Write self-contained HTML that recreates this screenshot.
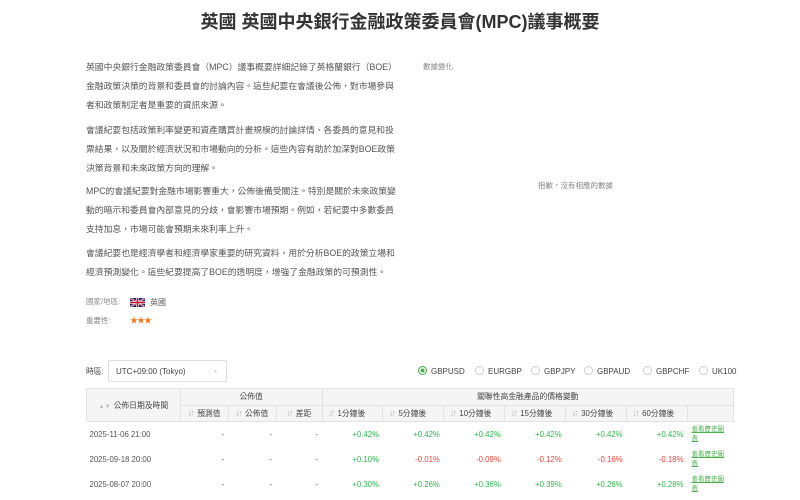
<!DOCTYPE html><html><head><meta charset="utf-8"><style>
*{margin:0;padding:0;box-sizing:border-box}
body{width:800px;height:500px;overflow:hidden;background:#fff;font-family:"Liberation Sans","Noto Sans CJK TC",sans-serif;color:#444;position:relative}
.a{position:absolute;white-space:nowrap}
h1{position:absolute;top:8px;left:0;width:800px;text-align:center;font-size:18px;font-weight:bold;color:#333}
.p{position:absolute;left:86px;font-size:8.8px;line-height:19px;color:#555}
.lab{font-size:7.5px;color:#888}
table{position:absolute;left:86px;top:388px;width:648px;border-collapse:collapse;font-size:7.8px}
th{background:#f5f5f5;font-weight:normal;color:#444;border:1px solid #e3e3e3;height:16.5px}
td{height:25px;text-align:right;padding-right:4px;color:#555}
.g{color:#2db84d}.r{color:#f0423a}
.s{color:#bbb;font-size:6px;margin-right:3px}
.lk{color:#4caf50;text-decoration:underline;font-size:6.5px;text-align:left;line-height:9px;padding-left:4px}
.rad{display:inline-block;width:9px;height:9px;border:1px solid #ccc;border-radius:50%;vertical-align:-1px;margin-right:4px}
.rl{font-size:8px;color:#444}
</style></head><body>
<h1>英國 英國中央銀行金融政策委員會(MPC)議事概要</h1>
<div class="p" style="top:58px">英國中央銀行金融政策委員會（MPC）議事概要詳細記錄了英格蘭銀行（BOE）<br>金融政策決策的背景和委員會的討論內容。這些紀要在會議後公佈，對市場參與<br>者和政策制定者是重要的資訊來源。</div>
<div class="p" style="top:121px">會議紀要包括政策利率變更和資產購買計畫規模的討論詳情、各委員的意見和投<br>票結果，以及關於經濟狀況和市場動向的分析。這些內容有助於加深對BOE政策<br>決策背景和未來政策方向的理解。</div>
<div class="p" style="top:182px">MPC的會議紀要對金融市場影響重大，公佈後備受關注。特別是關於未來政策變<br>動的暗示和委員會內部意見的分歧，會影響市場預期。例如，若紀要中多數委員<br>支持加息，市場可能會預期未來利率上升。</div>
<div class="p" style="top:244px">會議紀要也是經濟學者和經濟學家重要的研究資料，用於分析BOE的政策立場和<br>經濟預測變化。這些紀要提高了BOE的透明度，增強了金融政策的可預測性。</div>
<div class="a lab" style="left:86px;top:296px">國家/地區:</div>
<svg class="a" style="left:130px;top:298px" width="15" height="9" viewBox="0 0 60 36"><rect width="60" height="36" fill="#012169"/><path d="M0 0L60 36M60 0L0 36" stroke="#fff" stroke-width="7"/><path d="M0 0L60 36M60 0L0 36" stroke="#c8102e" stroke-width="3"/><path d="M30 0V36M0 18H60" stroke="#fff" stroke-width="11"/><path d="M30 0V36M0 18H60" stroke="#c8102e" stroke-width="6"/></svg>
<div class="a" style="left:150px;top:297px;font-size:8px;color:#555">英國</div>
<div class="a lab" style="left:86px;top:315px">重要性:</div>
<div class="a" style="left:130px;top:315px;font-size:8px;color:#f07a1a;letter-spacing:-1px">★★★</div>
<div class="a lab" style="left:423px;top:61px">數據變化</div>
<div class="a lab" style="left:538px;top:180px">抱歉，沒有相應的數據</div>
<div class="a" style="left:86px;top:366px;font-size:7.8px;color:#444">時區:</div>
<div class="a" style="left:108px;top:360px;width:119px;height:22px;border:1px solid #ddd;border-radius:2px;font-size:8px;padding:6px 7px;color:#444">UTC+09:00 (Tokyo)<span style="position:absolute;right:8px;top:6px;font-size:6px;color:#999">⌄</span></div>
<div class="a rl" style="left:418px;top:366px"><span class="rad" style="background:#4caf50;border-color:#4caf50;box-shadow:inset 0 0 0 1.5px #fff"></span>GBPUSD</div>
<div class="a rl" style="left:475px;top:366px"><span class="rad"></span>EURGBP</div>
<div class="a rl" style="left:531px;top:366px"><span class="rad"></span>GBPJPY</div>
<div class="a rl" style="left:584px;top:366px"><span class="rad"></span>GBPAUD</div>
<div class="a rl" style="left:643px;top:366px"><span class="rad"></span>GBPCHF</div>
<div class="a rl" style="left:699px;top:366px"><span class="rad"></span>UK100</div>
<table>
<colgroup><col style="width:94px"><col style="width:48px"><col style="width:48px"><col style="width:46px"><col style="width:61px"><col style="width:61px"><col style="width:61px"><col style="width:61px"><col style="width:61px"><col style="width:61px"><col style="width:46px"></colgroup>
<tr><th rowspan="2"><span class="s">▲▼</span>公佈日期及時間</th><th colspan="3">公佈值</th><th colspan="7">關聯性高金融產品的價格變動</th></tr>
<tr><th><span class="s">⇵</span>預測值</th><th><span class="s">⇵</span>公佈值</th><th><span class="s">⇵</span>差距</th><th style="text-align:left;padding-left:6px"><span class="s">⇵</span>1分鐘後</th><th style="text-align:left;padding-left:6px"><span class="s">⇵</span>5分鐘後</th><th style="text-align:left;padding-left:6px"><span class="s">⇵</span>10分鐘後</th><th style="text-align:left;padding-left:6px"><span class="s">⇵</span>15分鐘後</th><th style="text-align:left;padding-left:6px"><span class="s">⇵</span>30分鐘後</th><th style="text-align:left;padding-left:6px"><span class="s">⇵</span>60分鐘後</th><th></th></tr>
<tr><td style="text-align:left;padding-left:3px">2025-11-06 21:00</td><td>-</td><td>-</td><td>-</td><td class="g">+0.42%</td><td class="g">+0.42%</td><td class="g">+0.42%</td><td class="g">+0.42%</td><td class="g">+0.42%</td><td class="g">+0.42%</td><td class="lk">查看歷史圖<br>表</td></tr>
<tr><td style="text-align:left;padding-left:3px">2025-09-18 20:00</td><td>-</td><td>-</td><td>-</td><td class="g">+0.10%</td><td class="r">-0.01%</td><td class="r">-0.09%</td><td class="r">-0.12%</td><td class="r">-0.16%</td><td class="r">-0.18%</td><td class="lk">查看歷史圖<br>表</td></tr>
<tr><td style="text-align:left;padding-left:3px">2025-08-07 20:00</td><td>-</td><td>-</td><td>-</td><td class="g">+0.30%</td><td class="g">+0.26%</td><td class="g">+0.36%</td><td class="g">+0.39%</td><td class="g">+0.26%</td><td class="g">+0.28%</td><td class="lk">查看歷史圖<br>表</td></tr>
</table>
</body></html>
